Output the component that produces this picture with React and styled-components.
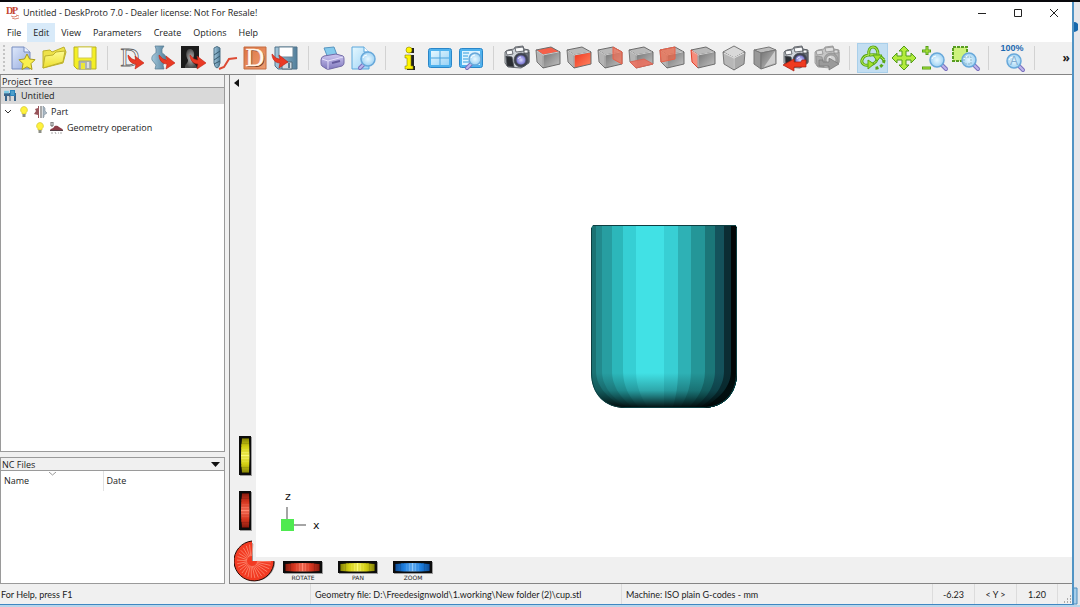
import React from 'react';
import styled, { createGlobalStyle, css } from 'styled-components';

const uiFont = '"Open Sans", "Noto Sans", sans-serif';
const statusFont = 'Lato, "Liberation Sans", sans-serif';

/* ---------- gradients shared by the icons ---------- */

const Gradients = () => (
	<Defs aria-hidden="true">
		<defs>
			<linearGradient id="paper" x1="0" y1="0" x2="1" y2="1">
				<stop offset="0" stopColor="#dfe9fb" />
				<stop offset="1" stopColor="#94a9de" />
			</linearGradient>
			<linearGradient id="yellow" x1="0" y1="0" x2="0" y2="1">
				<stop offset="0" stopColor="#fdfb93" />
				<stop offset="1" stopColor="#eddf2c" />
			</linearGradient>
			<linearGradient id="purple" x1="0" y1="0" x2="0" y2="1">
				<stop offset="0" stopColor="#cfc9f2" />
				<stop offset="1" stopColor="#8078bd" />
			</linearGradient>
			<linearGradient id="sky" x1="0" y1="0" x2="1" y2="1">
				<stop offset="0" stopColor="#e6f8ff" />
				<stop offset="1" stopColor="#9bd3f6" />
			</linearGradient>
			<linearGradient id="steel" x1="0" y1="0" x2="1" y2="0">
				<stop offset="0" stopColor="#a5c8dc" />
				<stop offset="1" stopColor="#527f9b" />
			</linearGradient>
			<linearGradient id="grayFace" x1="0" y1="0" x2="1" y2="1">
				<stop offset="0" stopColor="#737373" />
				<stop offset="1" stopColor="#c4c4c4" />
			</linearGradient>
			<linearGradient id="redFace" x1="0" y1="0" x2="1" y2="1">
				<stop offset="0" stopColor="#f0341c" />
				<stop offset="1" stopColor="#ff8a66" />
			</linearGradient>
			<linearGradient id="orange" x1="0" y1="0" x2="1" y2="1">
				<stop offset="0" stopColor="#dc7340" />
				<stop offset="1" stopColor="#ee9e72" />
			</linearGradient>
			<radialGradient id="glass">
				<stop offset="0" stopColor="#e8f8ff" />
				<stop offset="1" stopColor="#9fd2f3" />
			</radialGradient>
			<radialGradient id="lens">
				<stop offset="0" stopColor="#dcdcff" />
				<stop offset="1" stopColor="#6c68cc" />
			</radialGradient>
			<radialGradient id="bust">
				<stop offset="0" stopColor="#b8b8b8" />
				<stop offset="1" stopColor="#4c4c4c" />
			</radialGradient>
		</defs>
	</Defs>
);

/* ---------- icon parts ---------- */

const RedArrow = () => (
	<path
		d="M9 9c2 1 3 5 8 5l-1-4 9 7-9 6 1-5c-5 0-8-4-8-9z"
		fill="#ea3a25"
		stroke="#bd2113"
		strokeWidth=".6"
	/>
);

const Lens = ({ x, y, r = 6, flip }) => (
	<g transform={`translate(${x} ${y})`}>
		<path d={flip ? 'M-4 5l-4 4' : 'M5 5l4 4'} stroke="#7a70bd" strokeWidth="4" strokeLinecap="round" />
		<path d={flip ? 'M-4 5l-4 4' : 'M5 5l4 4'} stroke="#bdb5ec" strokeWidth="2" strokeLinecap="round" />
		<circle r={r} fill="url(#glass)" stroke="#68a8da" strokeWidth="1.500" />
		<path d={`M${-r + 2} -1a4 4 0 0 1 4-3`} fill="none" stroke="#fff" strokeWidth="1" />
	</g>
);

const Camera = ({ faded }) => (
	<g stroke={faded ? '#8f8f8f' : '#4a4e54'} strokeWidth=".8" strokeLinejoin="round">
		<path d="M0 6l3-2 6-1 1-2 8-1 1 3 5 1v13l-8 5-13-1-3-4z" fill={faded ? '#c6c6c6' : '#cfd4d9'} />
		<path d="M1 10l6 1 2 10-7-1z" fill={faded ? '#a8a8a8' : '#2a2d32'} />
		<path d="M19 7l5-1v10l-3 2z" fill={faded ? '#b2b2b2' : '#6a7078'} />
		<path d="M1 5l6-1 1 4-6 1zM10 2l8-1 1 4-8 1zM19 4l4 0v3l-4 0z" fill={faded ? '#dedede' : '#fafbfc'} />
		<circle cx="16" cy="14" r="7" fill={faded ? '#a5a5a5' : '#3b4050'} />
		<circle cx="16" cy="14" r="5" fill={faded ? '#d2d2d2' : 'url(#lens)'} />
		<path d="M13 13a3 3 0 0 1 3-2" fill="none" stroke="#fff" />
	</g>
);

// box seen from the front left, one side marked red
const Box = ({ side }) => (
	<g stroke="#6c6c6c" strokeWidth="1" strokeLinejoin="round">
		<path d="M0 4l15-3 9 5-17 3z" fill={side === 'top' ? '#f4604a' : '#b9b9b9'} />
		<path d="M0 4l7 5v13L1 16z" fill={side === 'left' ? '#f58d7c' : '#b4b4b4'} stroke={side === 'left' ? '#e2402c' : '#777'} />
		<path d="M7 9l17-3v12L7 22z" fill={side === 'front' ? 'url(#redFace)' : 'url(#grayFace)'} />
		<path d="M1 5l6 4 16-3M7 9v12" fill="none" stroke="#e4e4e4" strokeWidth=".8" />
		{side === 'right' && <path d="M15 1l9 5v12l-9-5z" fill="#f7694d" fillOpacity=".65" stroke="#e8614b" />}
		{side === 'bottom' && <path d="M1 16l14-3 9 5-17 4z" fill="#f36a57" fillOpacity=".8" stroke="#d96657" />}
		{side === 'back' && <path d="M0 4l15-3v12L1 16z" fill="#f7623f" fillOpacity=".65" stroke="#e8614b" />}
	</g>
);

const DLetter = ({ fill, ...rest }) => (
	<text x="11" y="20" textAnchor="middle" fontFamily="Liberation Serif, serif" fontSize="26" fill={fill} {...rest}>
		D
	</text>
);

/* ---------- toolbar icons, 24 x 24 ---------- */

const icons = {
	newProject: (
		<>
			<path d="M1 1h12l6 5v17H1z" fill="url(#paper)" stroke="#778cc0" />
			<path d="M13 1v5h6" fill="#edf3ff" stroke="#778cc0" />
			<path d="M16 8l2.500 5 5.500.7-4 4 1 5.800-5-2.700-5 2.700 1-5.800-4-4 5.500-.7z" fill="#f9ef4e" stroke="#a99b1d" />
		</>
	),
	open: (
		<g stroke="#bdb12c" strokeLinejoin="round">
			<path d="M1 22L1 5l7-1 2 2 12-5 2 5-3 11z" fill="#eee24a" />
			<path d="M1 22l2-12 8-1 3-3 9-1-2 11z" fill="url(#yellow)" />
		</g>
	),
	save: (
		<>
			<path d="M1 1h22v22H4l-3-3z" fill="#f4ef25" stroke="#b8b020" />
			<path d="M5 1h14v11H5z" fill="#fcfdf7" stroke="#d2cb50" />
			<path d="M6 15h12v8H6z" fill="#aeb4b5" stroke="#a3a583" />
			<path d="M8 17h4v6H8z" fill="#ece836" />
			<path d="M14 16h2v6h-2z" fill="#dce0df" />
		</>
	),
	loadGeometry: (
		<>
			<DLetter fill="#fafafa" stroke="#666" strokeWidth=".8" />
			<RedArrow />
		</>
	),
	loadVase: (
		<>
			<path
				d="M5 0h9l-2 3v4c2 1 5 3 4 7l-3 5 1 4H5l1-4-4-5c-1-4 2-6 4-7V3z"
				fill="url(#steel)"
				stroke="#547a90"
				strokeWidth=".7"
			/>
			<RedArrow />
		</>
	),
	loadBitmap: (
		<>
			<path d="M0 0h18v22H0z" fill="#1c1c1c" />
			<path d="M4 22c0-5 3-4 3-8-3-5-2-11 2-11s6 6 2 11c0 4 4 3 5 8z" fill="url(#bust)" />
			<RedArrow />
		</>
	),
	cutter: (
		<>
			<path d="M2 2q3-3 6 0v15q-1 5-3 5t-3-5z" fill="url(#steel)" stroke="#4d7186" />
			<path d="M2 9l6-4M2 14l6-4M2 18l6-3" stroke="#37596d" />
			<path d="M7 23l5-2 5-8 8-1" fill="none" stroke="#dd4b35" strokeWidth="2" />
		</>
	),
	wizard: (
		<>
			<path d="M1 1h22v22H1z" fill="url(#orange)" stroke="#c46c42" />
			<DLetter fill="#7c3417" x="13" y="21" />
			<DLetter fill="#fff7ec" x="12" stroke="#fff7ec" strokeWidth=".4" />
		</>
	),
	writeNc: (
		<>
			<path d="M1 1h22v22H4l-3-3z" fill="url(#steel)" stroke="#51728a" />
			<path d="M5 1h14v10H5z" fill="#fff" stroke="#6b8698" />
			<path d="M8 16h10v7H8z" fill="#d2dbe2" stroke="#536b7b" />
			<path d="M14 17h2v5h-2z" fill="#5c7c92" />
			<g transform="translate(-11 -1)">
				<RedArrow />
			</g>
		</>
	),
	print: (
		<>
			<path d="M4 2l10-1 3 8-9 3z" fill="#85cbed" stroke="#5796c1" />
			<path d="M1 14q0-3 3-4l12-2 7 2q1 1 1 3v4q0 2-2 3l-12 3q-3 1-5-1l-3-2q-1-1-1-3z" fill="url(#purple)" stroke="#726aa6" />
			<path d="M2 13l6 2 15-4M8 15v8" fill="none" stroke="#e4e0fa" />
			<path d="M12 17l8-2" stroke="#655c9e" strokeWidth="2" />
		</>
	),
	preview: (
		<>
			<path d="M1 1h12l5 5v17H1z" fill="url(#sky)" stroke="#5aa7dc" />
			<path d="M13 1v5h5" fill="#fff" stroke="#5aa7dc" />
			<Lens x={17} y={13} r={7} flip />
		</>
	),
	info: (
		<>
			<path d="M12 2h5v5h-5zM11 9h6v11h1v4h-8v-3h2z" fill="#222" />
			<circle cx="12" cy="4" r="3" fill="#fff500" stroke="#8a8300" strokeWidth=".6" />
			<path d="M8 9h6v11h2v3H8v-3h2v-8H8z" fill="#fff500" stroke="#8a8300" strokeWidth=".6" />
		</>
	),
	views: (
		<>
			<rect x="0.500" y="2.500" width="23" height="19" rx="2" fill="#4fb2ee" stroke="#2a86c8" />
			<path d="M3 5h18v14H3z" fill="url(#sky)" />
			<path d="M12 5v14M3 12h18" stroke="#4aa2dc" />
		</>
	),
	viewDetail: (
		<>
			<rect x="0.500" y="2.500" width="23" height="19" rx="2" fill="#4fb2ee" stroke="#2a86c8" />
			<path d="M3 5h18v14H3z" fill="#dff4ff" />
			<path d="M4 7h6M4 10h5M4 13h5M4 16h6" stroke="#329dde" />
			<Lens x={16} y={13} r={6} flip />
		</>
	),
	snapshot: <Camera />,
	viewTop: <Box side="top" />,
	viewFront: <Box side="front" />,
	viewRight: <Box side="right" />,
	viewBottom: <Box side="bottom" />,
	viewBack: <Box side="back" />,
	viewLeft: <Box side="left" />,
	isometric: (
		<g stroke="#777" strokeLinejoin="round">
			<path d="M12 0l11 6-11 6L1 6z" fill="#d9d9d9" />
			<path d="M1 6l11 6v12L2 18z" fill="#b7b7b7" />
			<path d="M23 6l-11 6v12l10-6z" fill="#a9a9a9" />
			<path d="M2 7l10 5 10-5M12 12v11" fill="none" stroke="#f0f0f0" />
		</g>
	),
	shaded: (
		<g stroke="#777" strokeLinejoin="round">
			<path d="M1 4l15-3 7 3-15 3z" fill="#bdbdbd" />
			<path d="M1 4l7 3v16l-7-5z" fill="#999" />
			<path d="M8 7l15-3v14L8 23z" fill="url(#grayFace)" />
			<path d="M11 21L22 5v12z" fill="#cdcdcd" stroke="none" />
		</g>
	),
	cameraRestore: (
		<>
			<Camera />
			<path d="M22 14v7H10v4l-11-6 11-6v3h7l1-2z" fill="#ef3a20" stroke="#a91d10" strokeWidth=".7" />
		</>
	),
	cameraNext: (
		<>
			<Camera faded />
			<path d="M4 14v6h10v4l10-6-10-6v4H8v-2z" fill="#9a9a9a" stroke="#777" strokeWidth=".7" />
		</>
	),
	orbit: (
		<>
			<g fill="none" stroke="#59a817" strokeWidth="3">
				<path d="M7 19C3 20 0 17 1 14s4-5 7-5c-1-5 1-8 4-8s5 3 5 8" />
				<path d="M9 9c6-1 11 1 14 5M17 9c0 5-3 9-8 10" />
				<path d="M23 14c0 5-5 9-10 8" strokeDasharray="3 2" />
			</g>
			<g fill="none" stroke="#c6f45c" strokeWidth="1">
				<path d="M7 19C3 20 0 17 1 14s4-5 7-5c-1-5 1-8 4-8s5 3 5 8" />
				<path d="M9 9c6-1 11 1 14 5M17 9c0 5-3 9-8 10" />
			</g>
			<path d="M7 14l6 4-6 5zM12 9h9l-5 6z" fill="#a4e22f" stroke="#59a817" />
		</>
	),
	pan: (
		<path
			d="M12 0l5 5h-3v5h5V7l5 5-5 5v-3h-5v5h3l-5 5-5-5h3v-5H5v3l-5-5 5-5v3h5V5H7z"
			fill="#b3ec3d"
			stroke="#539c19"
			strokeLinejoin="round"
		/>
	),
	zoomInOut: (
		<>
			<path d="M4 0v9M-1 5h9M-1 22h9" stroke="#559f17" strokeWidth="3" />
			<path d="M4 1v7M0 5h7M0 22h7" stroke="#b8ef42" strokeWidth="1" />
			<Lens x={14} y={14} r={7} />
		</>
	),
	zoomWindow: (
		<>
			<path d="M-1 1h14v14H-1z" fill="#cdf27c" stroke="#589d20" strokeWidth="2" strokeDasharray="3 1" />
			<Lens x={15} y={14} r={7} />
			<path d="M10 11h7v7h-7z" fill="none" stroke="#8db7c8" strokeDasharray="2 1" />
		</>
	),
	zoomAll: (
		<>
			<Lens x={14} y={15} r={7} />
			<text x="14" y="19" textAnchor="middle" fontFamily="Liberation Sans, sans-serif" fontSize="12" fill="#82acd0">
				A
			</text>
			<text x="12" y="5" textAnchor="middle" fontFamily="Liberation Sans, sans-serif" fontWeight="700" fontSize="9" fill="#1c68b0">
				100%
			</text>
		</>
	),
};

const toolGroups = [
	['newProject', 'open', 'save'],
	['loadGeometry', 'loadVase', 'loadBitmap', 'cutter', 'wizard', 'writeNc'],
	['print', 'preview'],
	['info', 'views', 'viewDetail'],
	[
		'snapshot', 'viewTop', 'viewFront', 'viewRight', 'viewBottom', 'viewBack',
		'viewLeft', 'isometric', 'shaded', 'cameraRestore', 'cameraNext',
	],
	['orbit', 'pan', 'zoomInOut', 'zoomWindow'],
	['zoomAll'],
];

const menus = ['File', 'Edit', 'View', 'Parameters', 'Create', 'Options', 'Help'];

/* ---------- small drawings ---------- */

const Logo = () => (
	<svg width="14" height="14" viewBox="0 0 14 14" aria-hidden="true">
		<text x="0" y="8" fontFamily="Liberation Serif, serif" fontWeight="700" fontSize="10" fill="#c4442e">D</text>
		<text x="6" y="8" fontFamily="Liberation Serif, serif" fontWeight="700" fontSize="10" fill="#c4442e">P</text>
		<path d="M5 10l3 1 3-1M6 12l3 1 4-1M10 9l3 1" fill="none" stroke="#dd8a78" />
	</svg>
);

const MachineIcon = () => (
	<svg width="13" height="12" viewBox="0 0 13 12" aria-hidden="true">
		<path d="M0 3h12v3H0zM1 5h2v6H1zM10 5h2v6h-2z" fill="#39658a" />
		<path d="M6 0h5v6H6z" fill="#2b86bd" />
		<path d="M0 1h5v2H0zM7 2h3M7 4h3" fill="#72c4df" stroke="#9bdaf0" strokeWidth=".6" />
		<path d="M5 6h1v5" fill="none" stroke="#4c5f72" />
	</svg>
);

const BulbIcon = () => (
	<svg width="8" height="12" viewBox="0 0 8 12" aria-hidden="true">
		<path d="M4 .5a3.500 3.500 0 0 1 2 6.300V8H2V6.800A3.500 3.500 0 0 1 4 .5z" fill="#fff23d" stroke="#d3c52c" strokeWidth=".7" />
		<path d="M2.500 8h3v3h-3z" fill="#8d8f84" />
	</svg>
);

const PartIcon = () => (
	<svg width="13" height="12" viewBox="0 0 13 12" aria-hidden="true">
		<path d="M5 0v12H4V9L0 8l2-3-1-2 3-1V0z" fill="#98545a" />
		<path d="M7 0v12" stroke="#555" />
		<path d="M9 0v12l1-1V9l3-2-2-2V2l-1-1z" fill="#a9b8c4" stroke="#7f8e9b" strokeWidth=".6" />
	</svg>
);

const OperationIcon = () => (
	<svg width="13" height="13" viewBox="0 0 13 13" aria-hidden="true">
		<path d="M1 0h2v4H1z" fill="none" stroke="#444" strokeWidth=".8" />
		<path d="M0 8c1-2 3-1 4-3s4-1 5 0 3 1 4 3z" fill="#8d3e48" />
		<path d="M0 8.500h13" stroke="#554047" />
		<path d="M1 11h2M5 10l1 2M8 11h1M11 10v2" stroke="#aaa" />
	</svg>
);

// shades run from the lit left side to the dark right side
const facets = [
	[5, '#228a8d'], [11, '#279ea1'], [21, '#2cb7ba'], [32, '#36cfd4'],
	[45, '#41e1e5'], [73, '#38cfd4'], [87, '#2eb1b5'], [100, '#249698'],
	[114, '#1b7678'], [124, '#14525b'], [133, '#0b2d33'], [140, '#020707'],
];

const facetPath = (x) => {
	const foot = Math.round(73 + (x - 73) * 0.55);
	return `M${x} 0V146C${x} 164 ${Math.round((x + foot) / 2)} 176 ${foot} 184H146V0z`;
};

const Cup = () => (
	<svg width="146" height="183" viewBox="0 0 146 183" role="img" aria-label="cup.stl">
		<defs>
			<clipPath id="cupShape">
				<path d="M2 0H144L146 3V148C146 169 132 183 112 183H34C14 183 0 169 0 148V3z" />
			</clipPath>
			<linearGradient id="footShade" x1="0" y1="0" x2="0" y2="1">
				<stop offset="0" stopColor="#002022" stopOpacity="0" />
				<stop offset=".5" stopColor="#002022" stopOpacity=".3" />
				<stop offset="1" stopColor="#000" stopOpacity=".95" />
			</linearGradient>
		</defs>
		<g clipPath="url(#cupShape)">
			<rect width="146" height="183" fill="#1b7273" />
			{facets.map(([x, shade]) => (
				<path key={x} d={facetPath(x)} fill={shade} />
			))}
			<rect y="148" width="146" height="35" fill="url(#footShade)" />
			<path d="M2 .5H144M.5 3V148C.5 169 14 182.500 34 182.500H112C132 182.500 145.500 169 145.500 148V3" fill="none" stroke="#0d3f42" />
		</g>
	</svg>
);

const Axes = () => (
	<AxesDrawing width="42" height="48" viewBox="0 0 42 48" role="img" aria-label="Axes">
		<path d="M7 21v14M13 39h13" stroke="#888" strokeWidth="1.500" />
		<path d="M1 33h13v12H1z" fill="#4eea50" />
		<text x="5" y="14" fontFamily="DejaVu Sans, sans-serif" fontSize="11" fill="#111">z</text>
		<text x="33" y="43" fontFamily="DejaVu Sans, sans-serif" fontSize="11" fill="#111">x</text>
	</AxesDrawing>
);

const wheelColors = {
	red: ['#4c0b05', '#d6361f', '#ff8a72'],
	yellow: ['#4b4a00', '#d3cf13', '#fbf878'],
	blue: ['#06295c', '#1d7fe0', '#8cc8fb'],
};

const Wheel = ({ color, vertical }) => {
	const [dark, mid, light] = wheelColors[color];
	const id = `wheel-${color}${vertical ? '-v' : ''}`;
	const size = vertical ? { width: 13, height: 40, viewBox: '0 0 13 40' } : { width: 40, height: 13, viewBox: '0 0 40 13' };

	return (
		<svg {...size} aria-hidden="true">
			<defs>
				<linearGradient id={id}>
					<stop offset="0" stopColor={dark} />
					<stop offset=".25" stopColor={mid} />
					<stop offset=".5" stopColor={light} />
					<stop offset=".75" stopColor={mid} />
					<stop offset="1" stopColor={dark} />
				</linearGradient>
			</defs>
			<g transform={vertical ? 'matrix(0 1 1 0 0 0)' : undefined}>
				<path d="M1 1h39v12H1z" fill="#9c9c9c" />
				<path d="M0 0h39v12H0z" fill="#0c0c0c" />
				<path d="M2 3q18-2 35 0v7q-17 1-35 0z" fill={`url(#${id})`} />
				<path d="M4 3v7M6 3v7M9 2v8M12 2v8M15 2v8M18 2v8M21 2v8M24 2v8M27 2v8M30 2v8M33 3v7M35 3v7" stroke={mid} strokeWidth=".8" />
			</g>
		</svg>
	);
};

const Dial = () => {
	const rays = Array.from({ length: 23 }, (_, i) => ((i * 12 + 3) * Math.PI) / 180);

	return (
		<svg width="42" height="42" viewBox="0 0 42 42" aria-hidden="true">
			<path d="M19 22V3a19 19 0 1 0 22 19z" fill="#999" />
			<path d="M18 21V1a20 20 0 1 0 22 20z" fill="#f23a22" />
			<path d="M18 1a20 20 0 1 0 22 20" fill="none" stroke="#240804" />
			{rays.map((a) => (
				<path
					key={a}
					d={`M${18 + 5 * Math.cos(a)} ${21 + 5 * Math.sin(a)}L${20 + 17 * Math.cos(a)} ${21 + 17 * Math.sin(a)}`}
					stroke="#ff9c84"
					strokeWidth=".7"
				/>
			))}
		</svg>
	);
};

/* ---------- app ---------- */

export const App = () => {
	return (
		<>
			<GlobalStyle />
			<Gradients />
			<Desktop>
				<Window>
					<TitleBar>
						<Logo />
						<Title>Untitled - DeskProto 7.0 - Dealer license: Not For Resale!</Title>
						<WindowButton aria-label="Minimize">
							<svg width="10" height="10"><path d="M1 5.500h8" stroke="#222" /></svg>
						</WindowButton>
						<WindowButton aria-label="Maximize">
							<svg width="10" height="10"><path d="M1.500 1.500h7v7h-7z" fill="none" stroke="#222" /></svg>
						</WindowButton>
						<WindowButton aria-label="Close">
							<svg width="10" height="10"><path d="M1 1l8 8M9 1l-8 8" stroke="#222" /></svg>
						</WindowButton>
					</TitleBar>

					<MenuBar>
						{menus.map((name) => (
							<MenuItem key={name} $active={name === 'Edit'}>{name}</MenuItem>
						))}
					</MenuBar>

					<Toolbar>
						<Handle />
						{toolGroups.map((group) => (
							<React.Fragment key={group[0]}>
								{group.map((name) => (
									<ToolButton key={name} aria-label={name} $active={name === 'orbit'}>
										<ToolIcon viewBox="0 0 24 24">{icons[name]}</ToolIcon>
									</ToolButton>
								))}
								<Separator />
							</React.Fragment>
						))}
						<MoreButton aria-label="More tools">»</MoreButton>
					</Toolbar>

					<Workspace>
						<Sidebar>
							<TreePanel>
								<PanelTitle>Project Tree</PanelTitle>
								<Tree>
									<TreeRow $selected><MachineIcon />Untitled</TreeRow>
									<TreeRow>
										<TreeToggle aria-label="Collapse Part">
											<svg width="9" height="8"><path d="M1 2l3 3 3-3" fill="none" stroke="#333" /></svg>
										</TreeToggle>
										<TreeIcons><BulbIcon /><PartIcon /></TreeIcons>
										Part
									</TreeRow>
									<TreeRow $depth={1}>
										<TreeIcons><BulbIcon /><OperationIcon /></TreeIcons>
										Geometry operation
									</TreeRow>
								</Tree>
							</TreePanel>
							<FilesPanel>
								<PanelTitle>
									NC Files
									<PanelButton aria-label="NC Files menu">
										<svg width="9" height="5"><path d="M0 0h9L4.500 5z" fill="#111" /></svg>
									</PanelButton>
								</PanelTitle>
								<FilesTable>
									<thead>
										<tr>
											<FileHead>
												<SortMark width="7" height="4"><path d="M0 0l3.500 3L7 0" fill="none" stroke="#999" /></SortMark>
												Name
											</FileHead>
											<FileHead>Date</FileHead>
										</tr>
									</thead>
								</FilesTable>
							</FilesPanel>
						</Sidebar>

						<Viewer>
							<SideRail>
								<RailButton aria-label="Collapse">
									<svg width="5" height="8"><path d="M5 0v8L0 4z" fill="#111" /></svg>
								</RailButton>
								<SideWheels>
									<RailButton aria-label="Pan vertically"><Wheel color="yellow" vertical /></RailButton>
									<RailButton aria-label="Rotate vertically"><Wheel color="red" vertical /></RailButton>
								</SideWheels>
							</SideRail>
							<Canvas>
								<ModelSpot><Cup /></ModelSpot>
								<AxesSpot><Axes /></AxesSpot>
							</Canvas>
							<BottomRail>
								<WheelButton><Wheel color="red" />ROTATE</WheelButton>
								<WheelButton><Wheel color="yellow" />PAN</WheelButton>
								<WheelButton><Wheel color="blue" />ZOOM</WheelButton>
							</BottomRail>
							<DialButton aria-label="Rotate in plane"><Dial /></DialButton>
						</Viewer>
					</Workspace>

					<StatusBar>
						<StatusCell>For Help, press F1</StatusCell>
						<StatusCell>Geometry file: D:\Freedesignwold\1.working\New folder (2)\cup.stl</StatusCell>
						<StatusCell>Machine: ISO plain G-codes - mm</StatusCell>
						<StatusCell $center>-6.23</StatusCell>
						<StatusCell $center>&lt; Y &gt;</StatusCell>
						<StatusCell $center>1.20</StatusCell>
						<GripCell>
							<svg width="9" height="9">
								<path d="M7 1h1M4 4h1M7 4h1M1 7h1M4 7h1M7 7h1" stroke="#aaa" strokeWidth="2" />
							</svg>
						</GripCell>
					</StatusBar>
				</Window>
				<Backdrop>
					<svg width="4" height="12"><path d="M0 1a5 5 0 0 1 0 10z" fill="#1768ac" /></svg>
					<svg width="4" height="18"><path d="M0 1h3v16H0" fill="#a8cde8" stroke="#4c8fc0" /></svg>
				</Backdrop>
			</Desktop>
		</>
	);
};

export default App;

const GlobalStyle = createGlobalStyle`
	* {
		box-sizing: border-box;
	}

	body {
		margin: 0;
		background: #b9d5ea;
		color: #1b1b1b;
		font: 9px/16px ${uiFont};
	}

	button {
		margin: 0;
		padding: 0;
		border: none;
		background: none;
		color: inherit;
		font: inherit;
	}

	svg {
		display: block;
		flex: none;
	}
`;

const Defs = styled.svg`
	position: absolute;
	width: 0;
	height: 0;
`;

const Desktop = styled.div`
	display: flex;
	min-height: 100vh;
	padding-bottom: 2px;
	border-top: 2px solid #08080c;
`;

const Window = styled.div`
	display: flex;
	flex: 1;
	flex-direction: column;
	min-width: 0;
	border-right: 2px solid #5193c4;
	border-bottom: 1px solid #3f87c2;
	background: #f0f0f0;
`;

const Backdrop = styled.div`
	display: flex;
	flex-direction: column;
	justify-content: space-between;
	width: 6px;
	padding-top: 19px;
	background: #e6e6ea;
`;

const TitleBar = styled.header`
	display: flex;
	align-items: center;
	height: 21px;
	padding-left: 6px;
	background: #fff;
`;

const Title = styled.h1`
	flex: 1;
	margin: 0 0 0 3px;
	font-size: 9px;
	font-weight: 400;
`;

const WindowButton = styled.button`
	display: grid;
	width: 36px;
	height: 21px;
	place-items: center;
`;

const MenuBar = styled.nav`
	display: flex;
	height: 19px;
	padding-left: 1px;
	background: #fff;
`;

const MenuItem = styled.button`
	padding: 1px 6px 0;
	background: ${({ $active }) => ($active ? '#d8eaf9' : 'transparent')};
`;

const Toolbar = styled.div`
	display: flex;
	align-items: center;
	height: 33px;
	border-bottom: 1px solid #858585;
`;

const Handle = styled.div`
	width: 4px;
	height: 26px;
	margin-left: 3px;
	border-left: 2px dotted #c4c4c4;
`;

const ToolButton = styled.button`
	display: grid;
	width: 31px;
	height: 30px;
	place-items: center;
	${({ $active }) =>
		$active &&
		css`
			background: #c3def2;
			outline: 1px solid #a9cfea;
			outline-offset: -1px;
		`}
`;

const ToolIcon = styled.svg`
	width: 24px;
	height: 24px;
	overflow: visible;
`;

const Separator = styled.div`
	width: 1px;
	height: 24px;
	margin: 0 7px;
	background: #d2d2d2;
`;

const MoreButton = styled.button`
	margin-left: auto;
	padding: 0 2px;
	font-size: 12px;
	font-weight: 700;
`;

const Workspace = styled.main`
	display: flex;
	flex: 1;
	gap: 4px;
`;

const Sidebar = styled.aside`
	display: flex;
	flex-direction: column;
	width: 225px;
	gap: 5px;
`;

const panel = css`
	display: flex;
	flex-direction: column;
	border: 1px solid #9a9a9a;
	border-top: none;
	background: #fff;
`;

const TreePanel = styled.section`
	${panel}
	flex: 1;
`;

const FilesPanel = styled.section`
	${panel}
	height: 127px;
	border-top: 1px solid #9a9a9a;
`;

const PanelTitle = styled.div`
	display: flex;
	justify-content: space-between;
	height: 13px;
	padding: 0 4px 0 1px;
	border-bottom: 1px solid #9a9a9a;
	background: #f0f0f0;
	line-height: 14px;
`;

const PanelButton = styled.button`
	display: grid;
	place-items: center;
`;

const Tree = styled.ul`
	margin: 0;
	padding: 0;
	list-style: none;
`;

const TreeRow = styled.li`
	display: flex;
	align-items: center;
	height: 16px;
	padding-left: ${({ $depth }) => ($depth ? 35 : 3)}px;
	gap: 4px;
	background: ${({ $selected }) => ($selected ? '#d9d9d9' : 'transparent')};
`;

const TreeToggle = styled.button`
	width: 12px;
`;

const TreeIcons = styled.span`
	display: flex;
	align-items: center;
	gap: 6px;
`;

const FilesTable = styled.table`
	width: 100%;
	border-collapse: collapse;
	table-layout: fixed;
`;

const FileHead = styled.th`
	position: relative;
	height: 20px;
	padding: 0 3px;
	font-weight: 400;
	text-align: left;

	&:first-child {
		width: 102px;
		border-right: 1px solid #e2e2e2;
	}
`;

const SortMark = styled.svg`
	position: absolute;
	top: 1px;
	left: 48px;
`;

const Viewer = styled.section`
	display: grid;
	flex: 1;
	grid-template-rows: 1fr 26px;
	grid-template-columns: 26px 1fr;
	border-bottom: 1px solid #858585;
	border-left: 1px solid #858585;
`;

const SideRail = styled.div`
	display: flex;
	flex-direction: column;
	grid-area: 1 / 1;
	align-items: flex-start;
	justify-content: space-between;
	padding: 4px 0 26px 4px;
`;

const SideWheels = styled.div`
	display: grid;
	padding-left: 5px;
	gap: 15px;
`;

const RailButton = styled.button`
	display: block;
`;

const Canvas = styled.div`
	display: grid;
	grid-area: 1 / 2;
	background: #fff;
`;

const ModelSpot = styled.div`
	grid-area: 1 / 1;
	place-self: center;
`;

const AxesSpot = styled.div`
	grid-area: 1 / 1;
	place-self: end start;
	padding: 0 0 23px 24px;
`;

const AxesDrawing = styled.svg`
	overflow: visible;
`;

const BottomRail = styled.div`
	display: flex;
	grid-area: 2 / 2;
	padding: 4px 0 0 27px;
	gap: 15px;
`;

const WheelButton = styled.button`
	display: flex;
	flex-direction: column;
	align-items: center;
	width: 40px;
	font: 6px/8px "DejaVu Sans", sans-serif;
`;

const DialButton = styled.button`
	grid-area: 1 / 1 / -1 / -1;
	place-self: end start;
	margin: 0 0 1px 4px;
`;

const StatusBar = styled.footer`
	display: grid;
	grid-template-columns: 1fr 1fr 1fr 42px 42px 41px 14px;
	height: 20px;
	font: 9px/22px ${statusFont};
`;

const StatusCell = styled.div`
	overflow: hidden;
	padding: 0 ${({ $center }) => ($center ? 0 : 4)}px;
	border-right: 1px solid #dcdcdc;
	text-align: ${({ $center }) => ($center ? 'center' : 'left')};
	white-space: nowrap;

	&:first-child {
		padding-left: 1px;
	}
`;

const GripCell = styled.div`
	display: grid;
	place-items: end;
`;
